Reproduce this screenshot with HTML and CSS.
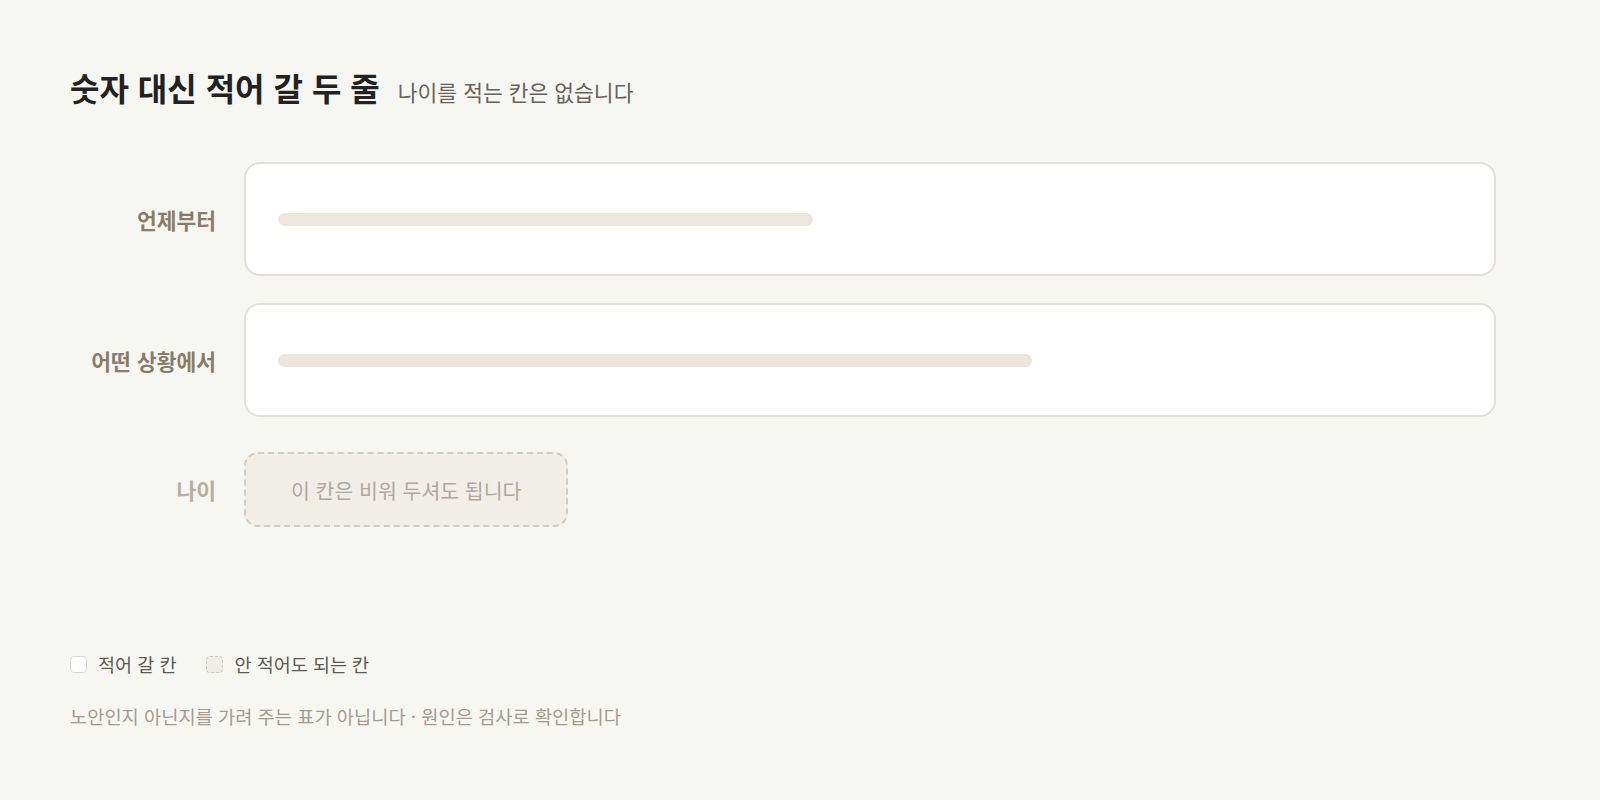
FILE: index.html
```
<!DOCTYPE html>
<html lang="ko">
<head>
    <meta charset="UTF-8">
    <meta name="viewport" content="width=device-width, initial-scale=1.0">
    <title>숫자 대신 적어 갈 두 줄</title>
    <link rel="stylesheet" href="styles.css">
</head>
<body>
    <div class="page">
        <div class="heading">
            <h1>숫자 대신 적어 갈 두 줄</h1>
            <span class="sub">나이를 적는 칸은 없습니다</span>
        </div>

        <div class="form">
            <!-- 적어 갈 칸 -->
            <div class="row">
                <div class="label">언제부터</div>
                <div class="field">
                    <div class="line" style="width: 535px;"></div>
                </div>
            </div>
            <div class="row">
                <div class="label">어떤 상황에서</div>
                <div class="field">
                    <div class="line" style="width: 754px;"></div>
                </div>
            </div>

            <!-- 비워 둬도 되는 칸 -->
            <div class="row optional">
                <div class="label">나이</div>
                <div class="empty-field">이 칸은 비워 두셔도 됩니다</div>
            </div>
        </div>

        <div class="legend">
            <span class="legend-item"><span class="swatch"></span>적어 갈 칸</span>
            <span class="legend-item"><span class="swatch dashed"></span>안 적어도 되는 칸</span>
        </div>

        <p class="note">노안인지 아닌지를 가려 주는 표가 아닙니다 · 원인은 검사로 확인합니다</p>
    </div>
</body>
</html>
```

FILE: styles.css
```
body {
    font-family: "Noto Sans CJK KR", "Noto Sans", sans-serif;
    background-color: #f6f7f2;
    color: #333;
    margin: 0;
}

.page {
    padding: 68px 104px 0 70px;
}

.heading {
    display: flex;
    align-items: baseline;
    gap: 18px;
}

h1 {
    margin: 0;
    font-size: 32px;
    font-weight: bold;
    color: #222;
    line-height: 38px;
}

.sub {
    font-size: 21.5px;
    color: #68625c;
}

.form {
    margin-top: 55px;
    display: flex;
    flex-direction: column;
    gap: 27px;
}

.row {
    display: flex;
    align-items: center;
    gap: 28px;
}

.label {
    width: 146px;
    flex-shrink: 0;
    text-align: right;
    font-size: 21.5px;
    font-weight: bold;
    color: #8b7b6a;
}

.field {
    flex: 1;
    height: 110px;
    background: white;
    border: 2px solid #e4dfd8;
    border-radius: 16px;
    padding: 0 32px;
    display: flex;
    align-items: center;
}

.line {
    height: 13px;
    border-radius: 7px;
    background: #ece6dc;
}

.optional {
    margin-top: 8px;
}

.optional .label {
    color: #b7ada1;
}

.empty-field {
    height: 71px;
    padding: 0 45px;
    display: flex;
    align-items: center;
    background: #f1ede7;
    border: 2px dashed #d3ccc3;
    border-radius: 14px;
    font-size: 20.5px;
    color: #b0a89e;
}

.legend {
    margin-top: 124px;
    display: flex;
    gap: 30px;
    font-size: 18.5px;
    color: #5e5954;
}

.legend-item {
    display: flex;
    align-items: center;
    gap: 11px;
}

.swatch {
    width: 15px;
    height: 15px;
    background: white;
    border: 1.5px solid #dcd7cf;
    border-radius: 4px;
}

.swatch.dashed {
    background: #efebe5;
    border: 1.5px dashed #cfc8bf;
}

.note {
    margin: 25px 0 0;
    font-size: 18.7px;
    color: #a39c94;
}
```
